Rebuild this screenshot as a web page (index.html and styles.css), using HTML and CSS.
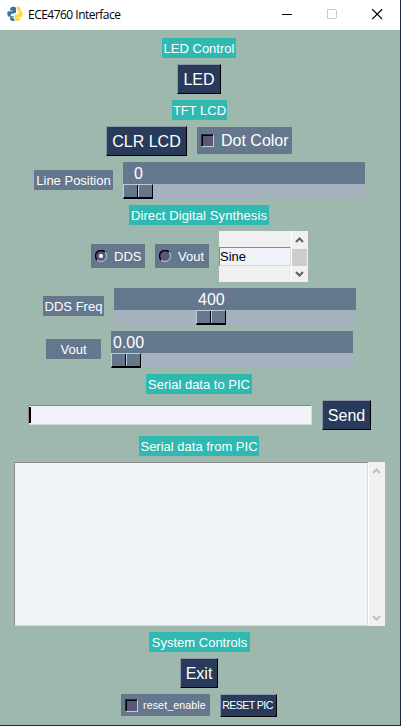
FILE: index.html
```html
<!DOCTYPE html>
<html lang="en">
<head>
<meta charset="utf-8">
<title>ECE4760 Interface</title>
<link rel="stylesheet" href="styles.css">
</head>
<body>
<div class="window">
  <header class="titlebar">
    <svg class="logo" width="16" height="16" viewBox="0 0 16 16">
      <path fill="#3875a8" d="M3.200 2.200C3.600 .4 8.300 0 9 2v4C9 7.400 7.600 7.500 5.500 7.600 4 7.700 3.700 9 3.600 10.700H2C-.2 10.200-.2 5.400 1.300 5.200H5.500V4.500H3z"/>
      <path fill="#3875a8" d="M3.300 10.200H7v1H5.500c0 1 .8 1.300 1.900 1.500v2C5 15.600 3 14.400 3 12.500z"/>
      <path fill="#ffd94f" d="M9.500 .9c2-.9 4.200.1 4.200 2v2.200c2.600.2 2.900 4.800.9 5.800l-3.700.1v.8h2.600c.5 2.700-2.700 3.900-5.200 2.900-.9-.5-.9-1.300-.8-2.900.1-2.600.7-3.500 2.900-3.700 1.400-.1 1.700-.8 1.700-3.200h-2.200V3.100z"/>
    </svg>
    <h1>ECE4760 Interface</h1>
    <svg class="controls" width="120" height="30" viewBox="0 0 120 30" fill="none" shape-rendering="crispEdges">
      <path stroke="#000" d="M1 14.500h10"/>
      <path stroke="#ccc" d="M46.500 9.500h9v9h-9z"/>
      <path stroke="#000" stroke-width="1.200" shape-rendering="auto" d="M92 9.200l10 10M102 9.200l-10 10"/>
    </svg>
  </header>
  <main class="panel">
    <div class="row"><span class="label w74">LED Control</span></div>
    <div class="row"><button class="btn w44">LED</button></div>
    <div class="row odd"><span class="label w55">TFT LCD</span></div>
    <div class="row"><button class="btn w81">CLR LCD</button><label class="check dot"><i class="box"></i>Dot Color</label></div>
    <div class="row odd sliders"><span class="label slate w79">Line Position</span>
      <div class="slider"><div class="value v-line">0</div><div class="trough"><i class="thumb"></i></div></div></div>
    <div class="row"><span class="label w140">Direct Digital Synthesis</span></div>
    <div class="row odd synth">
      <label class="radio"><svg width="12" height="12" viewBox="0 0 12 12"><circle cx="6" cy="6" r="5" fill="#5c5779"/><path d="M2.100 9.900A5.500 5.500 0 0 1 9.900 2.100" fill="none" stroke="#000" stroke-width="1.500"/><path d="M9.900 2.100A5.500 5.500 0 0 1 2.100 9.900" fill="none" stroke="#c2cad2"/><circle cx="6" cy="6" r="2" fill="#fff"/></svg><span>DDS</span></label>
      <label class="radio"><svg width="12" height="12" viewBox="0 0 12 12"><circle cx="6" cy="6" r="5" fill="#5c5779"/><path d="M2.100 9.900A5.500 5.500 0 0 1 9.900 2.100" fill="none" stroke="#000" stroke-width="1.500"/><path d="M9.900 2.100A5.500 5.500 0 0 1 2.100 9.900" fill="none" stroke="#c2cad2"/></svg><span>Vout</span></label>
      <div class="list"><div class="item">Sine</div>
        <div class="scroll"><svg width="9" height="6" viewBox="0 0 9 6"><path d="M1 5L4.500 1.500 8 5"/></svg><i></i><svg width="9" height="6" viewBox="0 0 9 6"><path d="M1 1L4.500 4.500 8 1"/></svg></div></div>
    </div>
    <div class="row odd sliders"><span class="label slate w61">DDS Freq</span>
      <div class="slider"><div class="value v-freq">400</div><div class="trough"><i class="thumb t-freq"></i></div></div></div>
    <div class="row odd sliders"><span class="label slate w55">Vout</span>
      <div class="slider"><div class="value v-out">0.00</div><div class="trough"><i class="thumb"></i></div></div></div>
    <div class="row"><span class="label w106">Serial data to PIC</span></div>
    <div class="row odd send"><div class="entry"><i class="caret"></i></div><button class="btn w49">Send</button></div>
    <div class="row"><span class="label w120">Serial data from PIC</span></div>
    <div class="row odd output"><div class="text"></div>
      <div class="scroll off"><svg width="9" height="6" viewBox="0 0 9 6"><path d="M1 5L4.500 1.500 8 5"/></svg><svg width="9" height="6" viewBox="0 0 9 6"><path d="M1 1L4.500 4.500 8 1"/></svg></div></div>
    <div class="row odd"><span class="label w101">System Controls</span></div>
    <div class="row"><button class="btn w38">Exit</button></div>
    <div class="row"><label class="check reset"><i class="box"></i>reset_enable</label><button class="btn small">RESET PIC</button></div>
  </main>
</div>
</body>
</html>
```
FILE: styles.css
```css
* { box-sizing: border-box; }
body { margin: 0; background: #1c2b3e; font-family: "Liberation Sans", Arial, sans-serif; overflow: hidden; }
.window { width: 400px; height: 725px; background: #9fb8ad; }
.titlebar { height: 30px; background: #fff; display: flex; align-items: center; padding-left: 7px; }
.titlebar h1 { margin: 0 0 0 5px; font: 12px/30px "Open Sans", "Noto Sans", sans-serif; letter-spacing: -0.52px; color: #000; width: 253px; white-space: nowrap; }
.logo { margin-top: -2px; }
.controls { width: 119px; height: 30px; flex: none; }
.panel { width: 398px; padding-top: 8px; display: flex; flex-direction: column; gap: 6px; }
.row { display: flex; justify-content: center; align-items: flex-start; gap: 10px; }
.odd { padding-left: 1px; }
.label { height: 20px; padding-top: 1px; background: #2fb9b1; color: #fff; font-size: 13px; line-height: 19px; text-align: center; white-space: nowrap; flex: none; }
.slate { background: #64778d; }
.w38 { width: 38px; }
.w44 { width: 44px; }
.w49 { width: 49px; }
.w55 { width: 55px; }
.w61 { width: 61px; }
.w74 { width: 74px; }
.w79 { width: 79px; }
.w81 { width: 81px; }
.w101 { width: 101px; }
.w106 { width: 106px; }
.w120 { width: 120px; }
.w140 { width: 140px; letter-spacing: 0.1px; }
.btn { height: 30px; padding: 1px 0 0; flex: none; border: 1px solid; border-color: #8b95a8 #000 #000 #8b95a8; background: #283b5b; color: #fff; font: 16px/27px "Liberation Sans", Arial, sans-serif; white-space: nowrap; }
.small { width: 57px; height: 23px; padding: 0 2px 0 0; font-size: 10.67px; line-height: 21px; letter-spacing: -0.6px; }
.check { display: flex; align-items: center; background: #64778d; color: #fff; white-space: nowrap; flex: none; }
.dot { width: 95px; height: 27px; margin-top: 1px; padding-left: 4px; gap: 7px; font-size: 16px; }
.reset { width: 89px; height: 22px; padding-left: 4px; gap: 5px; font-size: 10.67px; letter-spacing: 0.1px; }
.box { width: 13px; height: 13px; flex: none; background: #5c5779; border: 1px solid; border-color: #222c38 #c2cad2 #c2cad2 #222c38; box-shadow: inset 1px 1px #000; }
.sliders .label { margin-top: 8px; }
.slider { width: 242px; }
.value { height: 22px; padding-top: 1px; background: #64778d; color: #fff; font-size: 16px; line-height: 22px; }
.v-line { padding-left: 11px; }
.v-freq { padding-left: 84px; }
.v-out { padding-left: 2px; }
.trough { height: 15px; background: #a6b2be; }
.thumb { display: block; width: 30px; height: 15px; border: solid; border-width: 1px 1px 2px 1px; border-color: #c2cad2 #000 #000 #c2cad2; background: linear-gradient(90deg, #64778d 13px, #000 13px 14px, #c2cad2 14px 15px, #64778d 15px); }
.t-freq { margin-left: 82px; }
.radio { width: 54px; height: 24px; margin-top: 13px; padding-left: 4px; display: flex; align-items: center; gap: 7px; background: #64778d; color: #fff; font-size: 13px; flex: none; }
.radio svg { flex: none; }
.list { width: 89px; height: 51px; background: #f0f0f0; display: flex; align-items: center; }
.item { width: 72px; height: 19px; border: 1px solid; border-color: #8a8a8a #d5d8dc #d5d8dc #8a8a8a; background: #f0f3f7; color: #000; font-size: 13px; line-height: 18px; }
.scroll { width: 17px; height: 100%; background: #f0f0f0; border-left: 1px solid #fff; display: flex; flex-direction: column; align-items: center; justify-content: space-between; padding: 6px 1px 5px 0; }
.scroll i { width: 15px; height: 17px; background: #cdcdcd; }
.scroll path { fill: none; stroke: #606060; stroke-width: 2; }
.off path { stroke: #bfbfbf; }
.send .entry { width: 284px; height: 20px; margin-top: 5px; }
.entry, .text { background: #f0f3f7; border: 1px solid; border-color: #8a8a8a #d5d8dc #d5d8dc #8a8a8a; }
.caret { display: block; width: 2px; height: 16px; margin-top: 1px; background: #000; }
.output { height: 164px; gap: 0; }
.text { width: 354px; height: 164px; }
```
